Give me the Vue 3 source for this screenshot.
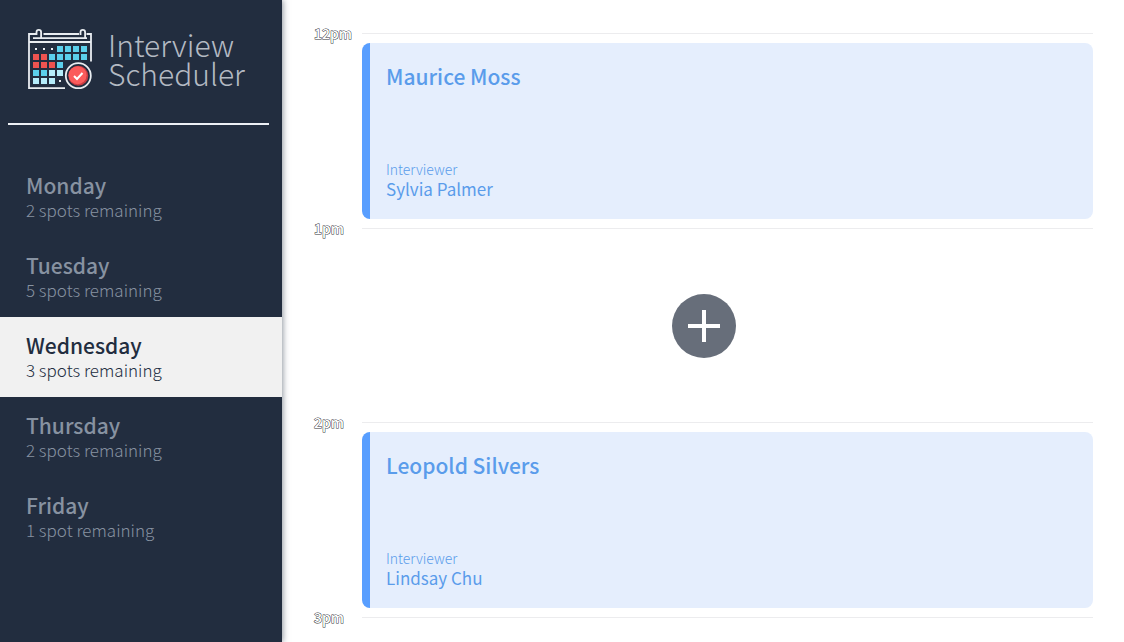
<script setup>
import { ref } from 'vue'

const selected = ref('Wednesday')
const days = [
  { name: 'Monday', spots: 2 },
  { name: 'Tuesday', spots: 5 },
  { name: 'Wednesday', spots: 3 },
  { name: 'Thursday', spots: 2 },
  { name: 'Friday', spots: 1 }
]
const slots = [
  { time: '12pm', student: 'Maurice Moss', interviewer: 'Sylvia Palmer' },
  { time: '1pm' },
  { time: '2pm', student: 'Leopold Silvers', interviewer: 'Lindsay Chu' },
  { time: '3pm', last: true }
]

const palette = { c: '#5bd0ec', r: '#ef5350', l: '#b5ecfa' }
const cells = ['...cccc', 'rrccccc', 'rrrc   ', 'ccll   ', 'lll.   '].flatMap((row, y) =>
  [...row].map((kind, x) => ({ kind, x: 12 + x * 8, y: 25 + y * 8 })).filter((c) => c.kind !== ' ')
)
</script>

<template>
  <div class="layout">
    <aside class="sidebar">
      <header class="brand">
        <svg class="logo" viewBox="0 0 72 72" aria-hidden="true">
          <g fill="none" stroke="#e9edf1" stroke-width="1.8">
            <path d="M12 10H5v54.2h36M19.500 10H55M62.500 10H67v27.500M5 18h62M9 14.200h54" />
            <path d="M12.500 11V8.200a2.300 2.300 0 0 1 4.600 0V14M56.500 11V8.200a2.300 2.300 0 0 1 4.600 0V14" />
          </g>
          <template v-for="c in cells" :key="`${c.x}-${c.y}`">
            <rect v-if="c.kind === '.'" :x="c.x - 1" :y="c.y - 1" width="2" height="2" fill="#e9edf1" />
            <rect v-else :x="c.x - 3" :y="c.y - 3" width="6" height="6" :fill="palette[c.kind]" />
          </template>
          <circle cx="54.300" cy="51.700" r="13.800" fill="#222d3f" />
          <circle cx="54.300" cy="51.700" r="12.500" fill="none" stroke="#e9edf1" stroke-width="1.800" />
          <circle cx="54.300" cy="51.700" r="10" fill="#c93b42" />
          <circle cx="53.600" cy="51.200" r="9" fill="#fb5b5b" />
          <path d="M50 52l3 3 5.500-6" fill="none" stroke="#fff" stroke-width="2" />
        </svg>
        <h1>Interview<br />Scheduler</h1>
      </header>
      <hr class="rule" />
      <nav class="days">
        <button
          v-for="day in days"
          :key="day.name"
          type="button"
          class="day"
          :class="{ active: day.name === selected }"
          @click="selected = day.name"
        >
          <span class="day-name">{{ day.name }}</span>
          <span class="day-spots">{{ day.spots }} {{ day.spots === 1 ? 'spot' : 'spots' }} remaining</span>
        </button>
      </nav>
    </aside>

    <main class="schedule">
      <section v-for="slot in slots" :key="slot.time" class="slot">
        <header class="slot-head">
          <h2>{{ slot.time }}</h2>
          <span class="line"></span>
        </header>
        <article v-if="slot.student" class="card">
          <h3>{{ slot.student }}</h3>
          <div>
            <p class="role">Interviewer</p>
            <p class="interviewer">{{ slot.interviewer }}</p>
          </div>
        </article>
        <div v-else-if="!slot.last" class="empty">
          <button type="button" class="add" aria-label="Add appointment">
            <svg viewBox="0 0 64 64" aria-hidden="true">
              <path d="M32 16v32M16 32h32" stroke="#fff" stroke-width="4" />
            </svg>
          </button>
        </div>
      </section>
    </main>
  </div>
</template>

<style>
body {
  background: #fff;
}
</style>

<style scoped>
.layout {
  display: flex;
  height: 100vh;
  overflow: hidden;
  font-family: "Noto Sans CJK SC", "Noto Sans", sans-serif;
}
h1, h2, h3, p {
  margin: 0;
}
.sidebar {
  flex: 0 0 282px;
  background: #222d3f;
  box-shadow: 1px 0 6px rgba(34, 45, 63, 0.5);
}
.brand {
  display: flex;
  align-items: flex-start;
  gap: 12px;
  padding: 24px 24px 0;
  height: 99px;
}
.logo {
  flex: none;
  width: 72px;
  height: 72px;
}
h1 {
  margin-top: 6px;
  color: #b4bac3;
  font-size: 30px;
  line-height: 29px;
  font-weight: 300;
}
.rule {
  height: 2px;
  margin: 0 13px 0 8px;
  border: 0;
  background: #edf0f5;
}
.days {
  margin-top: 32px;
}
.day {
  display: flex;
  flex-direction: column;
  width: 100%;
  height: 80px;
  padding: 16px 26px 0;
  border: 0;
  background: none;
  color: #8792a1;
  font-family: inherit;
  text-align: left;
  cursor: pointer;
}
.day.active {
  background: #f1f1f1;
  color: #222d3f;
}
.day-name {
  font-size: 21px;
  line-height: 25px;
  font-weight: 500;
}
.day-spots {
  font-size: 17px;
  line-height: 24px;
  font-weight: 300;
}
.schedule {
  flex: 1;
  min-width: 0;
  padding: 25px 31px 0 32px;
}
.slot-head {
  display: flex;
  height: 18px;
}
h2 {
  flex: 0 0 48px;
  color: #fff;
  font-size: 14px;
  line-height: 16px;
  font-weight: 500;
  -webkit-text-stroke: 1px #33363c;
  paint-order: stroke fill;
}
.line {
  flex: 1;
  height: 1px;
  margin-top: 8px;
  background: #ececee;
}
.card {
  display: flex;
  flex-direction: column;
  justify-content: space-between;
  box-sizing: border-box;
  height: 176px;
  margin: 0 0 1px 48px;
  padding: 16px 16px 20px;
  border-left: 8px solid #589eff;
  border-radius: 8px;
  background: #e5eefd;
  color: #5a9ceb;
}
h3 {
  font-size: 21px;
  line-height: 34px;
  font-weight: 500;
}
.role {
  font-size: 14px;
  line-height: 20px;
  font-weight: 300;
}
.interviewer {
  font-size: 17px;
  line-height: 20px;
}
.empty {
  display: grid;
  place-items: center;
  height: 176px;
}
.add {
  width: 64px;
  height: 64px;
  padding: 0;
  border: 0;
  border-radius: 50%;
  background: #676e7a;
  cursor: pointer;
}
.add svg {
  display: block;
}
</style>
